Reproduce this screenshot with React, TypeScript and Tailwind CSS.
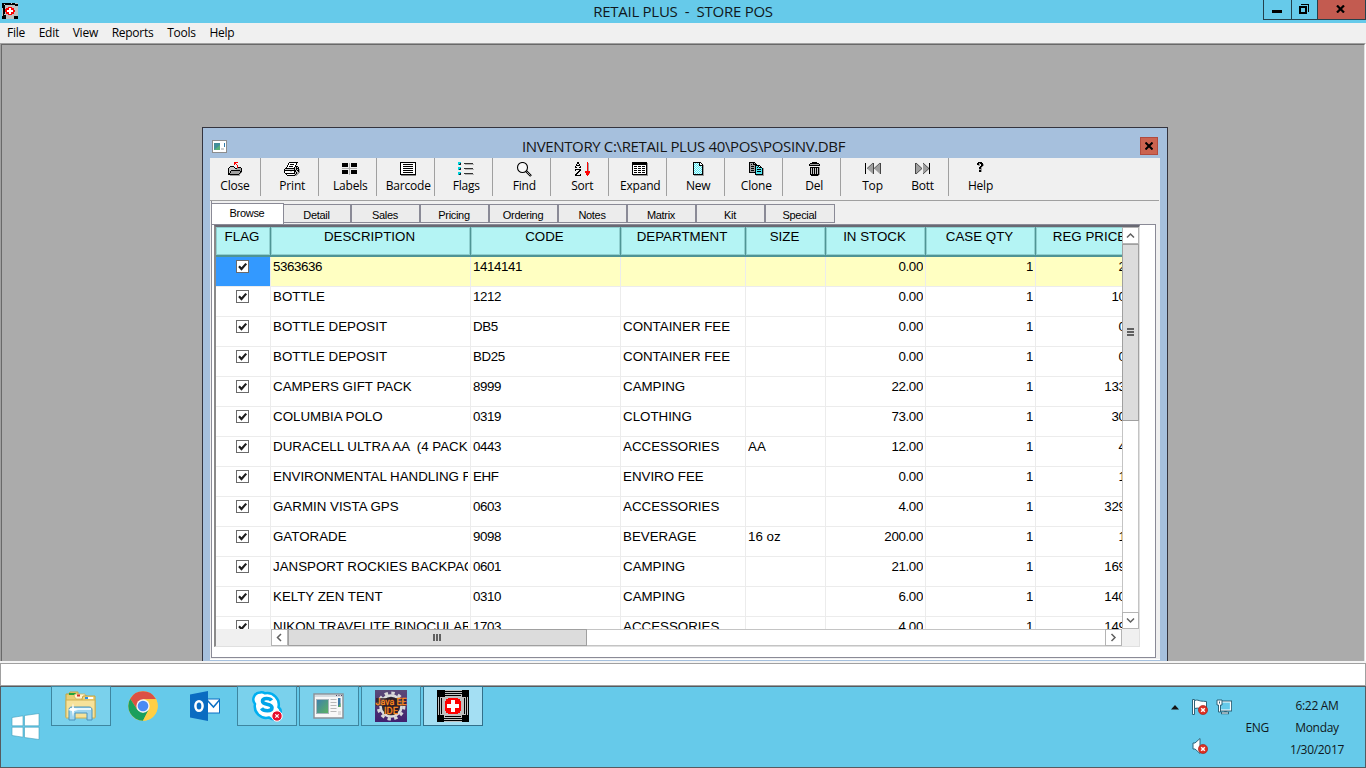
import React from 'react';

const ui = 'font-["Open_Sans",sans-serif]';

/* ---------- pixel art helper ---------- */
const palette: Record<string, string> = {
  K: '#000000', G: '#a0a0a0', W: '#ffffff', R: '#ff0000', C: '#52e6f0', D: '#606060', L: '#c8c8c8', B: '#e4fcfd',
};

function Pixels({ rows }: { rows: string[] }) {
  const w = Math.max(...rows.map((r) => r.length));
  return (
    <svg width={w} height={rows.length} viewBox={`0 0 ${w} ${rows.length}`} shapeRendering="crispEdges">
      {rows.flatMap((r, y) =>
        r.split('').map((c, x) =>
          palette[c] ? <rect key={`${x}-${y}`} x={x} y={y} width="1" height="1" fill={palette[c]} /> : null
        )
      )}
    </svg>
  );
}

const closeIcon = [
  '......RRRR....',
  '......RR......',
  '......R.R.....',
  '.........R....',
  '..KKKK...R....',
  '.KLLLLK..RKKK.',
  'KLLLLLLKKGGGGK',
  'KLLLLLLLGGGGGK',
  'KLLKKKKKKKKKGK',
  'KLKGGGGGGGGGKK',
  'KLKGGGGGGGGGKG',
  'KKGGGGGGGGGKG.',
  'KKKKKKKKKKKG..',
  '..GGGGGGGGGG..',
];
const printIcon = [
  '.....KKKKKKKKK..',
  '....KWWWWWWWK...',
  '....KWKKKKWWK...',
  '...KWWWWWWWK....',
  '...KWKKKKWWKKK..',
  '..KWWWWWWWKLKLK.',
  '.KKKKKKKKKKLKKK.',
  'KLLLLLLLLLKLKLKG',
  'KKKKKKKKKKKKLKKG',
  'KWWWWWLLWWKKLLKG',
  'KWWWWWWWWWKLKLGG',
  '.KKKKKKKKKKLKGG.',
  '..KWWWWWWWLKGG..',
  '...KKKKKKKKGG...',
];
const sortIcon = [
  '..KK........R..',
  '..KK........RG.',
  '.K..K.......RG.',
  '.KKKK.......RG.',
  'K....K......RG.',
  'KK..KK......RG.',
  '............RG.',
  'KKKKKK......RG.',
  'K...KK......RG.',
  '...KK.....RRRRR',
  '..KK......RRRRR',
  '.KK........RRRG',
  'KK...K.....RRR.',
  'KKKKKK......R..',
];
const newIcon = [
  'KKKKKKKK...',
  'KBCBCBKWK..',
  'KCBCBCKWWK.',
  'KBCBCBKKKKG',
  'KCBCBCBCBKG',
  'KBCBCBCBCKG',
  'KCBCBCBCBKG',
  'KBCBCBCBCKG',
  'KCBCBCBCBKG',
  'KBCBCBCBCKG',
  'KCBCBCBCBKG',
  'KBCBCBCBCKG',
  'KKKKKKKKKKG',
  '.GGGGGGGGGG',
];
const cloneIcon = [
  'KKKKKK.........',
  'KGGGKGK........',
  'KGKGKKKK.......',
  'KGGGGGKKKKK....',
  'KGKKKGKCCKWK...',
  'KGGGGGKCKCKKK..',
  'KGKKKGKCCCCCCKG',
  'KGGGGGKCKKKKCKG',
  'KGKKKGKCCCCCCKG',
  'KGGGGGKCKKKKCKG',
  'KKKKKKKCCCCCCKG',
  '......KCCCCCCKG',
  '......KKKKKKKKG',
  '.......GGGGGGGG',
];
const trashIcon = [
  '...KKKKK...',
  '.KKKKKKKKK.',
  'KGGGGGGGGGK',
  'KKKKKKKKKKK',
  '...........',
  '.KKKKKKKKKG',
  '.KLKLKLKLKG',
  '.KLKLKLKLKG',
  '.KLKLKLKLKG',
  '.KLKLKLKLKG',
  '.KLKLKLKLKG',
  '.KLKLKLKLKG',
  '.KKKKKKKKKG',
  '..KKKKKKKG.',
];
const helpIcon = [
  '.KKKK..', 'KKGKKK.', 'KKG.KKG', '.GG.KKG', '...KKG.', '..KKG..', '..KKG..', '..GGG..', '..KKG..', '..KKG..',
];

const LabelsIcon = () => (
  <svg width="16" height="14" shapeRendering="crispEdges">
    <path d="M0 1h6v4H0zM9 1h6v4H9zM0 8h6v4H0zM9 8h6v4H9z" />
    <path d="M7.500 1v12M0 6.500h15" stroke="#b0b0b0" />
  </svg>
);
const BarcodeIcon = () => (
  <svg width="16" height="14" shapeRendering="crispEdges">
    <rect x=".5" y=".5" width="15" height="12" fill="#fff" stroke="#000" />
    <path d="M3 2.500h10M3 4.500h10M3 6.500h10M3 8.500h10M3 10.500h10" stroke="#000" />
    <path d="M1 13.500h15" stroke="#888" />
  </svg>
);
const FlagsIcon = () => (
  <svg width="16" height="14" shapeRendering="crispEdges">
    <path d="M0 0h3v3H0zM0 5h3v3H0zM0 10h3v3H0z" fill="#00d5de" />
    <path d="M2 1h1v2H1V2h1zM2 6h1v2H1V7h1zM2 11h1v2H1v-1h1z" fill="#123" />
    <path d="M6 1.500h9M6 6.500h9M6 11.500h9" stroke="#333" />
    <path d="M7 2.500h9M7 7.500h9M7 12.500h9" stroke="#b5b5b5" />
  </svg>
);
const FindIcon = () => (
  <svg width="16" height="15">
    <circle cx="6.500" cy="5.500" r="5" fill="#f8f8f8" stroke="#000" strokeWidth="1.100" />
    <path d="M10 9l5 5" stroke="#000" strokeWidth="2.400" />
    <path d="M10.500 9.500l4 4" stroke="#ccc" strokeWidth=".8" />
  </svg>
);
const ExpandIcon = () => (
  <svg width="16" height="14" shapeRendering="crispEdges">
    <rect x=".5" y=".5" width="14" height="12" fill="#fff" stroke="#000" />
    <path d="M0 0h15v3H0z" />
    <path d="M2 4.500h3M6 4.500h3M10 4.500h3M2 6.500h3M6 6.500h3M10 6.500h3M2 8.500h3M6 8.500h3M10 8.500h3M2 10.500h3M6 10.500h3M10 10.500h3" stroke="#000" />
    <path d="M15.500 1v13M1 13.500h15" stroke="#999" />
  </svg>
);
const TopIcon = () => (
  <svg width="16" height="13">
    <path d="M.5 1v11" stroke="#000" />
    <path d="M8 1v11L2 6.500zM15 1v11L9 6.500z" fill="#a0a0a0" />
    <path d="M8 1L2 6.500M15 1L9 6.500" stroke="#333" strokeWidth=".7" />
    <path d="M8.500 1v11M15.500 1v11" stroke="#444" />
  </svg>
);
const BottIcon = () => (
  <svg width="16" height="13">
    <path d="M14.500 1v11" stroke="#000" />
    <path d="M1 1v11l6-5.500zM8 1v11l6-5.500z" fill="#a0a0a0" />
    <path d="M1 1l6 5.500-6 5.500M8 1l6 5.500L8 12" stroke="#333" strokeWidth=".8" fill="none" />
    <path d="M.5 1v11" stroke="#444" />
  </svg>
);

/* ---------- application emblem ---------- */
const Emblem = ({ size }: { size: number }) => (
  <svg width={size} height={size} viewBox="0 0 32 32" shapeRendering="crispEdges">
    <rect width="32" height="32" fill="#c0c0c0" />
    <path d="M0 0h8v7H0zM25 0h7v7h-7zM0 25h7v7H0zM25 25h7v7h-7z" />
    <path d="M7 1.500h18M7 3.500h18M8 5.500h16M7 30.500h18M7 28.500h18M8 26.500h16M.5 7v18M2.500 7v18M4.500 8v16M31.500 7v18M29.500 7v18M27.500 8v16" stroke="#000" fill="none" />
    <path d="M11 8h10v1h2v2h1v10h-1v2h-2v1H11v-1H9v-2H8V11h1V9h2z" fill="#ff0000" />
    <path d="M14 10h4v4h4v4h-4v4h-4v-4h-4v-4h4z" fill="#fff" />
  </svg>
);
const SmallEmblem = () => (
  <svg width="16" height="16" shapeRendering="crispEdges">
    <rect width="16" height="16" fill="#c0c0c0" />
    <path d="M0 0h13v1h3v2h-3V2H3v10h1v4H0v-3h1V5H0zM12 13h4v3h-4z" />
    <path d="M2 1h1v1H2zM9 0h1v1H9zM2 11h1v1H2z" fill="#c0c0c0" />
    <path d="M6 4h4v1h2v2h1v2h-1v2h-2v1H6v-1H4V9H3V6h1V5h2z" fill="#f00" />
    <path d="M7 5h2v2h2v2H9v2H7V9H5V7h2z" fill="#fff" />
  </svg>
);
const WindowGlyph = () => (
  <svg width="15" height="13">
    <rect x=".5" y=".5" width="14" height="12" fill="#fff" stroke="#8d8d8d" />
    <rect x="2" y="3" width="6" height="7" fill="#438f9a" />
    <path d="M2 10l6-5v5z" fill="#57b07a" />
    <rect x="12" y="3" width="1" height="4" fill="#2e79ac" />
    <rect x="9" y="8" width="3" height="2" fill="#d0d0d0" />
  </svg>
);

/* ---------- toolbar ---------- */
type Tool = { label: string; icon: React.ReactNode; cell: string };
const std = 'w-[58px] border-r border-[#a0a0a0] pl-[5.5px]';
const tools: Tool[] = [
  { label: 'Close', icon: <Pixels rows={closeIcon} />, cell: 'w-[51px] border-r border-[#a0a0a0]' },
  { label: 'Print', icon: <Pixels rows={printIcon} />, cell: std },
  { label: 'Labels', icon: <LabelsIcon />, cell: std },
  { label: 'Barcode', icon: <BarcodeIcon />, cell: std },
  { label: 'Flags', icon: <FlagsIcon />, cell: std },
  { label: 'Find', icon: <FindIcon />, cell: std },
  { label: 'Sort', icon: <Pixels rows={sortIcon} />, cell: std },
  { label: 'Expand', icon: <ExpandIcon />, cell: std },
  { label: 'New', icon: <Pixels rows={newIcon} />, cell: std },
  { label: 'Clone', icon: <Pixels rows={cloneIcon} />, cell: std },
  { label: 'Del', icon: <Pixels rows={trashIcon} />, cell: std },
  { label: 'Top', icon: <TopIcon />, cell: 'w-[56px] pl-[7px]' },
  { label: 'Bott', icon: <BottIcon />, cell: 'w-[52px] border-r border-[#a0a0a0]' },
  { label: 'Help', icon: <Pixels rows={helpIcon} />, cell: 'w-[58px] pl-[5px]' },
];

const tabs = ['Detail', 'Sales', 'Pricing', 'Ordering', 'Notes', 'Matrix', 'Kit', 'Special'];

/* ---------- data grid ---------- */
const cols = 'grid grid-cols-[55px_200px_150px_125px_80px_100px_110px_110px]';
const headers = ['FLAG', 'DESCRIPTION', 'CODE', 'DEPARTMENT', 'SIZE', 'IN STOCK', 'CASE QTY', 'REG PRICE'];
const items: string[][] = [
  ['5363636', '1414141', '', '', '0.00', '1', '2.00'],
  ['BOTTLE', '1212', '', '', '0.00', '1', '10.00'],
  ['BOTTLE DEPOSIT', 'DB5', 'CONTAINER FEE', '', '0.00', '1', '0.05'],
  ['BOTTLE DEPOSIT', 'BD25', 'CONTAINER FEE', '', '0.00', '1', '0.25'],
  ['CAMPERS GIFT PACK', '8999', 'CAMPING', '', '22.00', '1', '133.00'],
  ['COLUMBIA POLO', '0319', 'CLOTHING', '', '73.00', '1', '30.00'],
  ['DURACELL ULTRA AA  (4 PACK', '0443', 'ACCESSORIES', 'AA', '12.00', '1', '4.99'],
  ['ENVIRONMENTAL HANDLING F', 'EHF', 'ENVIRO FEE', '', '0.00', '1', '1.00'],
  ['GARMIN VISTA GPS', '0603', 'ACCESSORIES', '', '4.00', '1', '329.00'],
  ['GATORADE', '9098', 'BEVERAGE', '16 oz', '200.00', '1', '1.99'],
  ['JANSPORT ROCKIES BACKPAC', '0601', 'CAMPING', '', '21.00', '1', '169.00'],
  ['KELTY ZEN TENT', '0310', 'CAMPING', '', '6.00', '1', '140.00'],
  ['NIKON TRAVELITE BINOCULAR', '1703', 'ACCESSORIES', '', '4.00', '1', '149.00'],
];

const Check = () => (
  <svg width="13" height="13">
    <rect x=".5" y=".5" width="12" height="12" fill="#fff" stroke="#6a6a6a" />
    <path d="M3 6.200l2.500 2.800L10.200 3.600" stroke="#1c1c1c" strokeWidth="2.200" fill="none" />
  </svg>
);

function GridRow({ item, active }: { item: string[]; active: boolean }) {
  return (
    <div className={`${cols} h-[30px] leading-5 ${active ? 'bg-[#ffffc2]' : 'bg-white'}`}>
      <div className={`flex justify-center border-r border-b border-[#ececec] pt-[3px] pr-[2px] ${active ? 'bg-[#3399ff]' : ''}`}>
        <Check />
      </div>
      {item.map((v, i) => (
        <div
          key={i}
          className={`border-r border-b border-[#ececec] pr-[2px] pl-[2px] whitespace-pre ${
            i >= 4 ? 'text-right tracking-[-0.35px]' : i === 1 || v === '5363636' ? 'tracking-[-0.4px]' : ''
          }`}
        >
          <div className="overflow-hidden">{v}</div>
        </div>
      ))}
    </div>
  );
}

const arrow = 'flex size-[17px] shrink-0 items-center justify-center border border-[#b4b4b4] bg-white';
const Chevron = ({ d }: { d: string }) => (
  <svg width="9" height="9"><path d={d} fill="none" stroke="#606060" strokeWidth="1.500" /></svg>
);

function DataGrid() {
  return (
    <div className="flex h-[422px] w-[926px] flex-col border-t-2 border-l-2 border-r border-b border-t-[#696973] border-l-[#8a8a8a] border-r-[#e0e0e0] border-b-[#e0e0e0] font-['Liberation_Sans',Arial,sans-serif] text-[13.33px] text-black">
      <div className="flex h-[402px]">
        <div className="w-[906px] shrink-0 overflow-hidden">
          <div className={`${cols} h-[30px] w-[930px]`}>
            {headers.map((h) => (
              <div key={h} className="border-r border-b-2 border-[#4f9494] bg-[#b4f4f4] pr-[2px] text-center leading-[19px] shadow-[inset_1px_1px_0_#8fcfcf,inset_-1px_-1px_0_#8fcfcf]">
                {h}
              </div>
            ))}
          </div>
          <div className="w-[930px]">
            {items.map((item, i) => <GridRow key={i} item={item} active={i === 0} />)}
          </div>
        </div>
        <div className="flex w-[17px] shrink-0 flex-col bg-white">
          <div className={arrow}><Chevron d="M1 6.500L4.500 3 8 6.500" /></div>
          <div className="flex h-[177px] w-[17px] flex-col items-center justify-center gap-px border border-[#a0a0a0] bg-[#dcdcdc] pb-[2px]">
            <div className="h-[2px] w-[7px] bg-[#606060]" />
            <div className="h-[2px] w-[7px] bg-[#606060]" />
            <div className="h-[2px] w-[7px] bg-[#606060]" />
          </div>
          <div className="w-[17px] flex-1 border-x border-[#c4c4c4]" />
          <div className={arrow}><Chevron d="M1 2.500L4.500 6 8 2.500" /></div>
        </div>
      </div>
      <div className="flex h-[17px] bg-[#f0f0f0]">
        <div className="w-[55px]" />
        <div className="flex w-[851px] border-y border-[#c4c4c4] bg-white">
          <div className="-my-px flex"><div className={arrow}><Chevron d="M6 1L2.500 4.500 6 8" /></div></div>
          <div className="-my-px flex w-[299px] items-center justify-center gap-px border border-[#a0a0a0] bg-[#dcdcdc] pr-px">
            <div className="h-[7px] w-[2px] bg-[#606060]" />
            <div className="h-[7px] w-[2px] bg-[#606060]" />
            <div className="h-[7px] w-[2px] bg-[#606060]" />
          </div>
          <div className="flex-1" />
          <div className="-my-px flex"><div className={arrow}><Chevron d="M2.500 1L6 4.500 2.500 8" /></div></div>
        </div>
      </div>
    </div>
  );
}

function InventoryWindow() {
  return (
    <div className="absolute top-[82px] left-[200px] flex h-[560px] w-[966px] flex-col border border-[#34343e] bg-[#a6c0dd] px-[7px]">
      <div className="flex h-[30px] shrink-0 items-end">
        <div className="flex w-[60px] pb-[5px] pl-[2px]"><WindowGlyph /></div>
        <div className={`${ui} flex-1 pr-[3px] pb-[2px] text-center text-[15px] leading-[20px] tracking-[-0.36px] whitespace-pre text-[#151515]`}>
          INVENTORY C:\RETAIL PLUS 40\POS\POSINV.DBF
        </div>
        <div className="flex w-[60px] justify-end pr-[2px] pb-[3px]">
          <div className="flex h-[18px] w-[18px] items-center justify-center border border-[#b04a3e] bg-[#cb6350]">
            <svg width="8" height="8"><path d="M.5 .5l7 7M7.500 .5l-7 7" stroke="#000" strokeWidth="2" /></svg>
          </div>
        </div>
      </div>
      <div className="flex h-[502px] shrink-0 flex-col border-b border-white bg-[#f0f0f0]">
        <div className="mr-px flex h-[43px] shrink-0 border-b border-[#a0a0a0]">
          {tools.map((t) => (
            <div key={t.label} className={`${t.cell} flex h-[38px] shrink-0 flex-col items-center`}>
              <div className="flex h-[18px] items-start pt-[4px]">{t.icon}</div>
              <div className={`${ui} pt-[1px] text-[12px] leading-[18px] tracking-[-0.2px] text-black`}>{t.label}</div>
            </div>
          ))}
        </div>
        <div className="ml-px flex h-[23px] shrink-0 items-end border-l border-[#8a8a96] pt-[2px] font-['Liberation_Sans',Arial,sans-serif] text-[11px] tracking-[-0.3px] text-black">
          <div className="h-full w-[72px] shrink-0 border-t border-r border-[#8a8a96] bg-white pr-px text-center leading-[18px]">
            Browse
          </div>
          <div className="flex pb-px">
            {tabs.map((t, i) => (
              <div key={t} className={`h-[19px] border-t border-r-2 border-b border-[#8a8a96] bg-[#ececec] pt-px pr-px text-center leading-[18px] last:border-r ${i === 0 ? 'w-[68px]' : 'w-[69px]'}`}>
                {t}
              </div>
            ))}
          </div>
        </div>
        <div className="mr-[4px] ml-px flex h-[434px] shrink-0 border-t border-r border-b border-l border-[#8a8a96] bg-white pl-[2px]">
          <DataGrid />
        </div>
      </div>
    </div>
  );
}

/* ---------- taskbar icons ---------- */
const ExplorerIcon = () => (
  <svg width="32" height="30" viewBox="0 0 32 30">
    <path d="M1 3h3l1-2h8v4h9v21H1z" fill="#e9cf76" stroke="#c4a343" />
    <rect x="4" y="2" width="7" height="2" fill="#1fa53a" />
    <path d="M9 5l1-2h10v5h-9z" fill="#fff4cf" stroke="#d0b25b" strokeWidth=".8" />
    <rect x="12" y="3.500" width="3" height="2" fill="#d2352b" />
    <path d="M17 8l1-3h12v21H17z" fill="#f2d67b" stroke="#c4a343" />
    <rect x="20" y="6" width="8" height="2" fill="#fff" />
    <rect x="20" y="6" width="3" height="2" fill="#2d8fe0" />
    <path d="M1 9h27l2 0v18H1z" fill="#f7e29a" stroke="#cfb053" />
    <path d="M4 29V19c0-2 1-3 3-3h17c2 0 3 1 3 3v10h-5v-7H10v7z" fill="#9fd5ef" stroke="#4b94bd" />
    <path d="M5 18h21" stroke="#e8f8ff" strokeWidth="2" />
    <path d="M8 12l1 5 4 2-4 1-1 6-1-6-4-1 4-2z" fill="#fff" />
  </svg>
);
const ChromeIcon = () => (
  <svg width="30" height="30" viewBox="0 0 48 48">
    <circle cx="24" cy="24" r="23.500" fill="#ffd04b" />
    <path d="M3.600 12.300A23.500 23.500 0 0 1 44.400 12.300L44.300 13.300H24L14.700 29.400z" fill="#dc5044" />
    <path d="M3.600 12.300L14.700 29.400 24 34.700 33.300 29.400 24 47.500A23.500 23.500 0 0 1 3.600 12.300z" fill="#1a9f5c" />
    <path d="M24 13.300h21A23.500 23.500 0 0 1 24 47.500l9.300-18.100z" fill="#ffcf45" />
    <circle cx="24" cy="24" r="10.700" fill="#f4f4f4" />
    <circle cx="24" cy="24" r="8.500" fill="#4a8af4" />
  </svg>
);
const OutlookIcon = () => (
  <svg width="30" height="30">
    <rect x="17" y="8" width="12.500" height="14" fill="#fff" stroke="#0b6fc4" />
    <path d="M17 9l6.500 7L29.500 9" fill="none" stroke="#0b6fc4" strokeWidth="1.500" />
    <path d="M0 3.500L18 0v30L0 26.500z" fill="#0a6cc1" />
    <ellipse cx="9" cy="15" rx="3.600" ry="4.800" fill="none" stroke="#fff" strokeWidth="2.500" />
  </svg>
);
const SkypeIcon = () => (
  <svg width="32" height="32" viewBox="0 0 32 32">
    <path d="M9 2.500a7 7 0 0 1 5 .8A11.500 11.500 0 0 1 27.500 17a7 7 0 0 1-9.500 10.500A11.500 11.500 0 0 1 4 14 7 7 0 0 1 9 2.500z" fill="#fff" stroke="#00aff0" strokeWidth="2.500" />
    <path d="M20.500 10.500c-1.500-2.500-9-3-9 .8 0 4.200 9.500 1.800 9.500 6.500 0 4-8.500 3.700-10.500 .5" fill="none" stroke="#00a4e8" strokeWidth="3.600" />
    <circle cx="26" cy="26" r="5.200" fill="#e6102d" stroke="#fff" />
    <path d="M24.300 24.300l3.400 3.400m0-3.400l-3.400 3.400" stroke="#fff" strokeWidth="1.200" />
  </svg>
);
const AppWindowIcon = () => (
  <svg width="31" height="26">
    <defs>
      <linearGradient id="pane" x1="0" y1="0" x2="1" y2="1"><stop offset="0" stopColor="#3e7fae" /><stop offset="1" stopColor="#5db35f" /></linearGradient>
    </defs>
    <rect x="1" y="1" width="29" height="24" fill="#f8f8f8" stroke="#8b9299" strokeWidth="1.500" />
    <path d="M2 3h27" stroke="#d4dbe0" strokeWidth="2" />
    <path d="M23 2.500h1m1.500 0h1m1.500 0h1" stroke="#546" />
    <rect x="3.500" y="6.500" width="12" height="14" fill="url(#pane)" stroke="#a8b6bd" />
    <path d="M17.500 6.500h6M17.500 9.500h6M17.500 12.500h6M17.500 15.500h6M17.500 18.500h6" stroke="#b9b9b9" />
    <rect x="25" y="5" width="2.500" height="9" fill="#3c79a9" />
    <path d="M25 14h2.500v-4z" fill="#5db35f" />
    <rect x="25" y="18" width="3" height="4" fill="#ddd" />
  </svg>
);
const JavaIcon = () => (
  <svg width="32" height="32" viewBox="0 0 32 32">
    <defs>
      <linearGradient id="eeBack" x1="0" y1="0" x2="0" y2="1"><stop offset="0" stopColor="#5b4a78" /><stop offset="1" stopColor="#41206f" /></linearGradient>
    </defs>
    <rect width="32" height="32" fill="url(#eeBack)" />
    <circle cx="16" cy="16" r="13" fill="none" stroke="#d8d8d8" strokeWidth="3" strokeDasharray="3.400 3.400" />
    <circle cx="16" cy="16" r="10.500" fill="#2c2738" stroke="#dcdcdc" strokeWidth="2.500" />
    <path d="M1 8h30v8H1zM9 16h14v8H9z" fill="#2c1c20" fillOpacity=".75" />
    <text x="16" y="15" textAnchor="middle" fontFamily="Roboto, sans-serif" fontSize="9.500" textLength="31" lengthAdjust="spacingAndGlyphs" stroke="#ff8a1e" strokeWidth=".3" fill="#ff8a1e">Java EE</text>
    <text x="16" y="23.500" textAnchor="middle" fontFamily="Roboto, sans-serif" fontSize="9.500" textLength="14" lengthAdjust="spacingAndGlyphs" stroke="#ff8a1e" strokeWidth=".3" fill="#ff8a1e">IDE</text>
  </svg>
);

const open = 'border-[#3e86a0] bg-[#7ad1ec]';
const tasks: { name: string; icon: React.ReactNode; look: string }[] = [
  { name: 'explorer', icon: <ExplorerIcon />, look: open },
  { name: 'chrome', icon: <ChromeIcon />, look: 'border-transparent' },
  { name: 'outlook', icon: <OutlookIcon />, look: 'border-transparent' },
  { name: 'skype', icon: <SkypeIcon />, look: open },
  { name: 'app', icon: <AppWindowIcon />, look: `${open} pr-[2px]` },
  { name: 'java', icon: <JavaIcon />, look: open },
  { name: 'pos', icon: <Emblem size={32} />, look: 'border-[#33708a] bg-[#a4dff3]' },
];

const RedBadge = ({ cx, cy }: { cx: number; cy: number }) => (
  <g>
    <circle cx={cx} cy={cy} r="4.600" fill="#dc3022" stroke="#a01f16" strokeWidth=".6" />
    <path d={`M${cx - 1.8} ${cy - 1.8}l3.600 3.600m0-3.600l-3.600 3.600`} stroke="#fff" strokeWidth="1.500" />
  </g>
);

function Tray() {
  return (
    <div className={`${ui} flex text-[12px] text-[#101820]`}>
      <div className="pt-[18px]"><svg width="8" height="5"><path d="M4 0l4 4.500H0z" fill="#151515" /></svg></div>
      <div className="flex w-[66px] flex-col pt-[12px] pl-[13px]">
        <div className="flex h-[39px] gap-[7px]">
          <svg width="17" height="17">
            <path d="M.5 .5h2v15h-2z" fill="#fff" stroke="#2d6379" />
            <path d="M2.500 1.500c3-1 4 0 6 .5s4 0 6 .5v7c-4 1.500-8-1.500-12 0z" fill="#fff" stroke="#2d6379" />
            <RedBadge cx={11} cy={11} />
          </svg>
          <svg width="17" height="16">
            <path d="M4.500 3h10v8h-10z" fill="#66caea" stroke="#2d6379" strokeWidth="3" />
            <path d="M4.500 3h10v8h-10z" fill="#66caea" stroke="#fff" strokeWidth="1.200" />
            <path d="M5 14h8M9.500 12v3" stroke="#2d6379" strokeWidth="2.600" />
            <path d="M6 14h6" stroke="#fff" />
            <path d="M1 1h5v5H4.500v7h-2V6H1z" fill="#fff" stroke="#2d6379" />
            <path d="M3 2.500h1v2H3z" fill="#2d6379" />
          </svg>
        </div>
        <svg width="17" height="17">
          <path d="M1 5h2l5-4.500v15L3 11H1z" fill="#fff" stroke="#2d6379" />
          <RedBadge cx={11} cy={11} />
        </svg>
      </div>
      <div className="pt-[33px] leading-4 tracking-[-0.3px]">ENG</div>
      <div className="ml-[16px] flex w-[64px] flex-col items-center pt-[8px] leading-[22px] tracking-[-0.3px]">
        <div>6:22 AM</div>
        <div>Monday</div>
        <div>1/30/2017</div>
      </div>
    </div>
  );
}

export default function App() {
  return (
    <div className="flex h-[768px] w-[1366px] flex-col overflow-hidden bg-[#f0f0f0]">
      <header className="flex h-[23px] shrink-0 justify-between bg-[#66caea]">
        <div className="w-[103px] pt-[3px] pl-[2px]"><SmallEmblem /></div>
        <div className={`${ui} text-[15px] leading-[22px] tracking-[-0.27px] whitespace-pre text-[#101820]`}>RETAIL PLUS  -  STORE POS</div>
        <div className="flex h-[20px] w-[103px] border-r border-b border-l border-[#23414d]">
          <div className="flex w-[28px] items-end justify-center border-r border-[#23414d] pr-px pb-[6px]"><div className="h-[3px] w-[10px] bg-black" /></div>
          <div className="flex w-[26px] items-center justify-center border-r border-[#23414d] pr-px pb-px">
            <svg width="10" height="10" shapeRendering="crispEdges">
              <path d="M2 .5h7.500V8" fill="none" stroke="#000" />
              <rect x="1" y="3" width="6" height="6" fill="none" stroke="#000" strokeWidth="2" />
            </svg>
          </div>
          <div className="flex flex-1 items-center justify-center bg-[#c35b50] pr-px pb-px">
            <svg width="10" height="8"><path d="M1 .5l7 7M8 .5l-7 7" stroke="#000" strokeWidth="2.200" /></svg>
          </div>
        </div>
      </header>
      <nav className={`${ui} flex h-[20px] shrink-0 gap-[13.7px] pl-[7px] text-[12px] leading-[20px] tracking-[-0.25px] text-black`}>
        {['File', 'Edit', 'View', 'Reports', 'Tools', 'Help'].map((m) => <span key={m}>{m}</span>)}
      </nav>
      <main className="relative h-[618px] shrink-0 overflow-hidden border-t border-r border-l border-t-[#a0a0a0] border-r-white border-l-[#a0a0a0]">
        <div className="relative h-[617px] overflow-hidden border-t border-r border-l border-t-[#696969] border-r-[#e3e3e3] border-l-[#696969] bg-[#ababab]">
          <InventoryWindow />
        </div>
      </main>
      <div className="h-[25px] shrink-0 border-t-2 border-[#f4f4f4]">
        <div className="h-[23px] border border-[#a0a0a0] bg-white" />
      </div>
      <footer className="flex h-[82px] shrink-0 justify-between border border-[#555b60] bg-[#66caea] pr-[16px]">
        <div className="flex">
          <div className="w-[50px] pt-[26px] pl-[10px]">
            <svg width="29" height="28">
              <path d="M1 4.500l11-1.700v10H1zM13.500 2.500L28 .5v12.300H13.500zM1 14.200h11v10L1 22.500zM13.500 14.200H28v12.300l-14.500-2z" fill="#fff" stroke="#3f9dbb" strokeWidth=".6" />
            </svg>
          </div>
          <div className="-mt-px flex h-[41px] gap-[2px]">
            {tasks.map((t) => (
              <div key={t.name} className={`flex h-[40px] w-[60px] items-center justify-center border ${t.look}`}>{t.icon}</div>
            ))}
          </div>
        </div>
        <Tray />
      </footer>
    </div>
  );
}
